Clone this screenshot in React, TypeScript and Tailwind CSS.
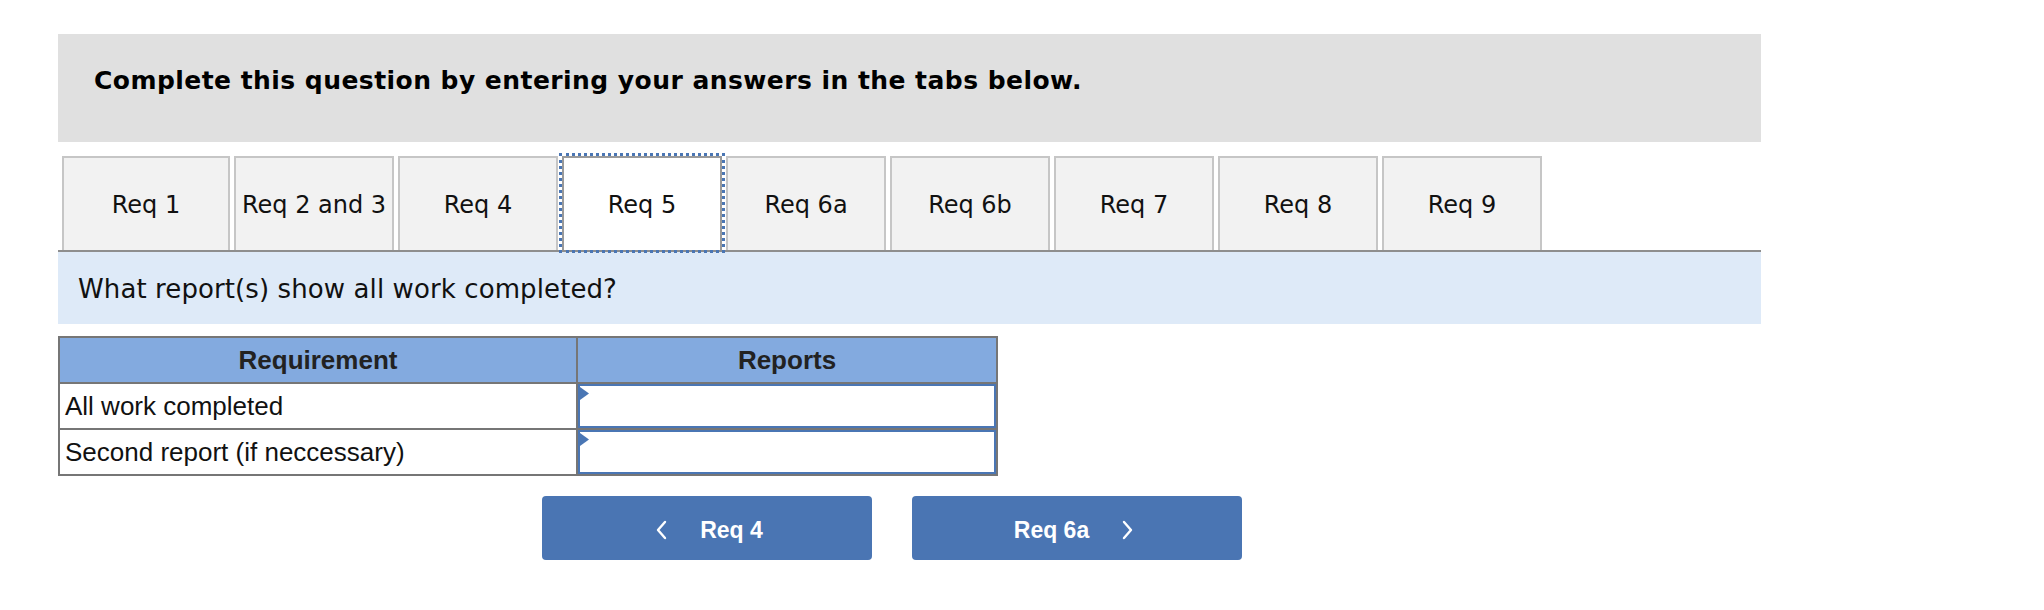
const TABS = ["Req 1", "Req 2 and 3", "Req 4", "Req 5", "Req 6a", "Req 6b", "Req 7", "Req 8", "Req 9"];
const ACTIVE = "Req 5";

const ROWS = ["All work completed", "Second report (if neccessary)"];

function Tab({ label }: { label: string }) {
  const active = label === ACTIVE;
  const width = label === "Req 1" ? "w-[168px]" : "w-[160px]";
  if (active) {
    return (
      <div
        className={`${width} flex h-[94px] items-center justify-center border-2 border-b-0 border-[#9a9a9a] bg-white pt-[2px] text-[24px] text-[#111] outline-3 outline-dotted outline-[#4a76b4]`}
      >
        {label}
      </div>
    );
  }
  return (
    <div
      className={`${width} flex h-[94px] items-center justify-center border-2 border-b-0 border-[#c6c6c6] bg-[#f2f2f2] pt-[2px] text-[24px] text-[#111]`}
    >
      {label}
    </div>
  );
}

function AnswerCell() {
  return (
    <div className="relative flex-1">
      <div className="h-full border-2 border-[#4a76b4] bg-white" />
      <svg
        className="absolute left-[2px] top-[3px]"
        width="9"
        height="13"
        viewBox="0 0 9 13"
      >
        <polygon points="0,0 9,6.5 0,13" fill="#4a76b4" />
      </svg>
    </div>
  );
}

function Chevron({ dir }: { dir: "left" | "right" }) {
  return (
    <svg width="12" height="20" viewBox="0 0 12 20" fill="none">
      <path
        d={dir === "left" ? "M10 2 L3 10 L10 18" : "M2 2 L9 10 L2 18"}
        stroke="white"
        strokeWidth="2.4"
        strokeLinecap="round"
        strokeLinejoin="round"
      />
    </svg>
  );
}

export default function App() {
  return (
    <div className="min-h-[610px] bg-white pl-[58px] pt-[34px] font-['DejaVu_Sans',sans-serif]">
      <div className="w-[1703px]">
        <div className="h-[108px] bg-[#e0e0e0] pl-[36px] pt-[33px]">
          <h2 className="text-[25px] font-bold leading-[28px] tracking-[0.45px] text-black">
            Complete this question by entering your answers in the tabs below.
          </h2>
        </div>

        <div className="mt-[14px] flex gap-[4px] border-b-2 border-[#8e8e8e] pl-[4px]">
          {TABS.map((t) => (
            <Tab key={t} label={t} />
          ))}
        </div>

        <div className="flex h-[72px] items-center bg-[#deeaf8] pl-[20px] pt-[3px] text-[26px] tracking-[0.1px] text-[#111]">
          What report(s) show all work completed?
        </div>

        <div className="mt-[12px] w-[940px] border-2 border-[#767676] font-['Liberation_Sans',Arial,sans-serif]">
          <div className="flex h-[44px] bg-[#83aadf] text-[26px] font-bold text-[#222]">
            <div className="flex w-[518px] items-center justify-center border-r-2 border-[#767676]">
              Requirement
            </div>
            <div className="flex flex-1 items-center justify-center">Reports</div>
          </div>
          {ROWS.map((r) => (
            <div key={r} className="flex h-[46px] border-t-2 border-[#767676]">
              <div className="flex w-[518px] items-center border-r-2 border-[#767676] pl-[5px] text-[26px] text-[#111]">
                {r}
              </div>
              <AnswerCell />
            </div>
          ))}
        </div>

        <div className="ml-[484px] mt-[20px] flex gap-[40px] font-['Liberation_Sans',Arial,sans-serif]">
          <button className="flex h-[64px] w-[330px] items-center justify-center gap-[33px] rounded-[4px] bg-[#4a75b3] pl-[4px] pt-[4px] text-[23px] font-bold text-white">
            <Chevron dir="left" />
            <span>Req 4</span>
          </button>
          <button className="flex h-[64px] w-[330px] items-center justify-center gap-[33px] rounded-[4px] bg-[#4a75b3] pr-[6px] pt-[4px] text-[23px] font-bold text-white">
            <span>Req 6a</span>
            <Chevron dir="right" />
          </button>
        </div>
      </div>
    </div>
  );
}
